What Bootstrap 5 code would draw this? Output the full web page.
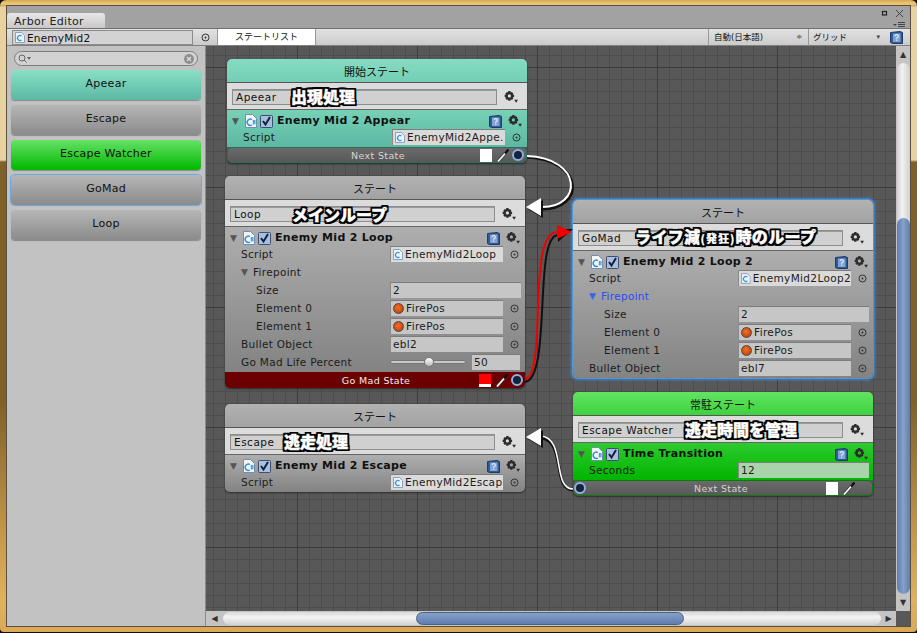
<!DOCTYPE html>
<html lang="ja"><head><meta charset="utf-8"><title>Arbor Editor</title>
<link href="https://cdn.jsdelivr.net/npm/bootstrap@5.3.0/dist/css/bootstrap.min.css" rel="stylesheet">
<style>
html,body{margin:0;height:633px;overflow:hidden;background:#111}
body{font-family:"DejaVu Sans","Noto Sans CJK JP",sans-serif;font-size:10.5px;line-height:14px;color:#111}
.frame{width:917px;height:632px;padding:6px 7px 6px 7px;border-radius:6px 6px 4px 4px;background:linear-gradient(180deg,#d8a850 0,#edcb7d 4px,#c9a668 6px,#e8d3a0 7px,#e8d3a0 160px,#7f6028 162px,#7f6028 400px,#c79a4c 540px,#e0b25e 600px,#d9a958 632px)}
.win{width:903px;height:620px;background:#a2a2a2;display:flex;flex-direction:column;position:relative;overflow:hidden;outline:1px solid #5a5040}
.tabstrip{height:22px;flex:none;display:flex;align-items:flex-end;justify-content:space-between}
.wintab{width:98px;height:15px;padding:2px 7px 0;background:linear-gradient(#e8e8e8,#c8c8c8);border-radius:3px 3px 0 0;font-size:11px;color:#222;letter-spacing:.3px;line-height:13px}
.winctl{display:flex;flex-direction:column;align-items:flex-end;height:22px;margin-top:-6px}
.tools{height:18px;flex:none;display:flex;background:linear-gradient(#e2e2e2,#cbcbcb);border-top:1px solid #707070;border-bottom:1px solid #808080}
.objfield{width:181px;margin:1px 0 0 5px;height:15px;background:#d3d3d3;border:1px solid #8c8c8c;padding-left:2px;display:flex;align-items:center;gap:2px;font-size:10.5px;letter-spacing:.2px}
.picker{width:24px;display:flex;align-items:center;justify-content:center}
.listtab{width:99px;background:#fff;border-left:1px solid #999;border-right:1px solid #999;text-align:center;font-size:9px;line-height:16px}
.toolspace{flex:1}
.pop{border-left:1px solid #999;font-size:8.5px;line-height:16px;padding-left:3px;position:relative}
.pop1{width:100px;padding-left:5px}.pop2{width:78px;padding-left:4px}
.popmark{position:absolute;right:6px;top:0;font-size:7px;color:#444}
.mainrow{flex:1;display:flex;min-height:0}
.side{width:199px;flex:none;background:#c2c2c2;padding:4px 4px 0;border-right:1px solid #8c8c8c}
.searchbox{height:15px;margin:1px 3px 4px 3px;background:#d2d2d2;border:1px solid #7d7d7d;border-radius:8px;display:flex;align-items:center;justify-content:space-between;padding:0 3px}
.statebtn{height:30px;border-radius:4px;margin-bottom:5px;text-align:center;line-height:27px;font-size:11px;letter-spacing:.25px;box-shadow:0 1px 1px #8a8a8a}
.b-teal{background:linear-gradient(#8adfc6,#5cb8a4)}
.b-gray{background:linear-gradient(#b6b6b6,#8b8b8b)}
.b-green{background:linear-gradient(#66e266,#00b800)}
.b-sel{box-shadow:0 0 0 1px #6fa8e0,0 0 2px #6fa8e0}
.viewcol{flex:1;display:flex;flex-direction:column;min-width:0}
.viewrow{flex:1;display:flex;min-height:0}
.canvasarea{flex:1;position:relative;overflow:hidden;background-color:#585858;background-image:linear-gradient(90deg,#3c3c3c 1px,transparent 1px),linear-gradient(#3c3c3c 1px,transparent 1px),linear-gradient(90deg,#4c4c4c 1px,transparent 1px),linear-gradient(#4c4c4c 1px,transparent 1px);background-size:120px 120px,120px 120px,12px 12px,12px 12px;background-position:91px 21px,91px 21px,7px 9px,7px 9px}
.vbar{width:14px;flex:none;background:#c4c4c4;display:flex;flex-direction:column;align-items:center}
.hbarrow{height:15px;flex:none;display:flex}
.hbar{flex:1;background:#c4c4c4;display:flex;align-items:center}
.corner{width:14px;background:#585858}
.arrowcell{flex:none;display:flex;align-items:center;justify-content:center;color:#333;font-size:8px;line-height:8px}
.vtrack{flex:1;width:13px;background:linear-gradient(90deg,#d0d0d0,#f2f2f2 40%,#d0d0d0);border-radius:7px;display:flex;flex-direction:column;justify-content:flex-end;min-height:0}
.vthumb{height:376px;border-radius:7px;background:linear-gradient(90deg,#5f7dae,#86a0c8 50%,#5f7dae)}
.htrack{flex:1;height:13px;background:linear-gradient(#d8d8d8,#f4f4f4 40%,#d2d2d2);border-radius:7px;padding-left:193px}
.hthumb{width:268px;height:13px;border-radius:7px;border:1px solid #48618c;background:linear-gradient(#86a0c8,#5f7dae)}
.nodebox{position:absolute;width:300px;border-radius:5px;overflow:hidden;display:flex;flex-direction:column;box-shadow:0 1px 2px #2a2a2a}
.nodesel{box-shadow:0 0 0 1px #4f95d8,0 0 3px 2px #4087cc}
.nhead{height:24px;text-align:center;line-height:28px;font-size:11px;color:#111;border-bottom:1px solid #555}
.nname{height:27px;flex:none;background:#dcdcdc;border-bottom:1px solid #666;display:flex;align-items:center;padding:1px 9px 0 5px;justify-content:space-between}
.nameinput{width:265px;height:16px;background:#d0d0d0;border:1px solid #8d8d8d;font-size:10.5px;line-height:14px;padding-left:3px;letter-spacing:.5px;box-shadow:inset 0 1px 0 #9a9a9a}
.nbody{padding:1px 0}
.h-teal{background:linear-gradient(#86dcc3,#74ceb5)}
.h-gray{background:linear-gradient(#b2b2b2,#a2a2a2)}
.h-green{background:linear-gradient(#62e462,#3ed23e)}
.c-teal{background:linear-gradient(#76d1b7,#5db8a2)}
.c-gray{background:linear-gradient(#aeaeae,#838383)}
.c-green{background:linear-gradient(#2dcb2d,#00b500)}
.ntitle{height:17px;display:flex;align-items:center;padding:3px 5px 0 5px;gap:2px;font-weight:700;font-size:11px;letter-spacing:.3px}
.chkbox{margin:0 1px}
.tri{color:#555;font-size:9px;width:11px;line-height:10px;flex:none}
.ttext{flex:1;padding-left:1px}
.nrow{height:18px;display:flex;align-items:center;padding-left:16px;position:relative;letter-spacing:.3px;font-size:10.5px;color:#1c1c1c}
.ind{padding-left:31px}
.fold{padding-left:16px;gap:2px}
.fold .tri{width:10px;font-size:9px}
.blue{color:#2a4cf0}
.blue .tri{color:#3d62f0}
.rlabel{width:149px;flex:none}
.ind .rlabel{width:134px}
.fld{height:16px;background:#c6c6c6;border:1px solid #8a8a8a;border-width:1px 0 0 1px;border-top-color:#7c7c7c;width:113px;flex:none;padding-left:2px;line-height:15px;overflow:hidden;white-space:nowrap;display:flex;align-items:center;gap:2px;letter-spacing:.35px}
.fldw{width:131px}
.fldlight{background:#dadada}
.fldgreen{background:#a9d4a9}
.dotpick{width:23px;flex:none;display:flex;justify-content:center}
.ball{width:11px;height:11px;border-radius:50%;background:radial-gradient(circle at 45% 40%,#ee7428,#b83000);border:1px solid #4a4a4a;flex:none}
.slide{width:76px;height:4px;flex:none;border-radius:2px;background:#c8c8c8;border:1px solid #777;position:relative;margin-right:5px}
.knob{position:absolute;left:33px;top:-4px;width:10px;height:10px;border-radius:50%;background:linear-gradient(#fff,#bbb);border:1px solid #777}
.fldnum{width:49px}
.nbar{height:16px;flex:none;display:flex;align-items:center;position:relative;border-radius:5px;font-size:9.5px;letter-spacing:.35px;text-align:center;color:#d4d4d4;line-height:15px}
.bar-gray{background:linear-gradient(#6a6a6a,#595959)}
.bar-t{border:1px solid #2a6e60}
.bar-g{border:1px solid #0a7a0a}
.bar-red{background:#6a0000;color:#eee;border-radius:0 0 5px 5px}
.barlabel{flex:1;padding-left:48px}
.barlabel-left{padding-left:30px}
.swatch{width:12px;height:13px;background:#fff;flex:none}
.swatch-red{background:linear-gradient(#ff0000 0,#ff0000 10px,#fff 10px)}
.dropper{width:12px;flex:none;margin:0 3px 0 5px;display:block}
.dropper-end{margin-right:17px}
.portdot{width:12px;height:12px;border-radius:50%;background:#16223a;border:2px solid #8db0e0;flex:none;margin-right:2px}
.portdot-left{margin:0}
.wires{position:absolute;left:0;top:0;width:690px;height:565px;pointer-events:none}
.cap{position:absolute;font-family:"Noto Sans CJK JP",sans-serif;font-weight:900;font-size:16px;line-height:18px;color:#fff;-webkit-text-stroke:.45px #fff;text-shadow:2px 0 0 #000,-2px 0 0 #000,0 2px 0 #000,0 -2px 0 #000,2px 2px 0 #000,-2px 2px 0 #000,2px -2px 0 #000,-2px -2px 0 #000,1px 2px 0 #000,-1px 2px 0 #000,1px -2px 0 #000,-1px -2px 0 #000;white-space:nowrap;letter-spacing:0}
.capwide{letter-spacing:.4px}
.capsm{font-size:11px;letter-spacing:1px;-webkit-text-stroke:.2px #fff}
</style></head><body>
<svg width="0" height="0" class="position-absolute">
<defs>
<symbol id="gear" viewBox="0 0 13 11"><path fill="#2c2c2c" fill-rule="evenodd" d="M4 0h2l.3 1.300 1-.5 1.400 1.400-.6 1 1.300.3v2l-1.300.3.6 1-1.400 1.400-1-.6L6 9H4l-.3-1.400-1 .6L1.300 6.800l.6-1L.6 5.500v-2l1.300-.3-.6-1L2.700.8l1 .5zM5 3a1.500 1.500 0 1 0 0 3 1.500 1.500 0 0 0 0-3z"/><path fill="#2c2c2c" d="M9.500 8h3.500l-1.750 2.800z"/></symbol>
<symbol id="script" viewBox="0 0 12 14"><path fill="#f4f4f4" stroke="#6f8fae" d="M.5.5h7l4 4v9H.5z"/><path fill="none" stroke="#2f8fd8" stroke-width="1.400" d="M7 5.500a3.200 3.200 0 1 0 0 5.500"/><path stroke="#2f8fd8" stroke-width=".8" d="M7.500 7h3M7.500 9h3M8.500 6v4.500M9.800 6v4.500"/></symbol>
<symbol id="scriptsm" viewBox="0 0 10 11"><path fill="#eef3f8" stroke="#8aa4bd" d="M.5.5h6l3 3v7h-9z"/><path fill="none" stroke="#3a94d8" stroke-width="1.300" d="M6.500 4a2.500 2.500 0 1 0 0 4"/></symbol>
<symbol id="check" viewBox="0 0 13 13"><rect x=".5" y=".5" width="12" height="12" rx="1" fill="#a9bfe0" stroke="#3c4f70"/><path fill="none" stroke="#12203a" stroke-width="2" d="M3 6l2.500 3.500L10 2"/></symbol>
<symbol id="book" viewBox="0 0 13 13"><path fill="#2f5a96" stroke="#1f3d68" d="M.5 1.500 10 .5l2.500 1v11H2.500l-2-1z"/><rect x="3" y="2.500" width="7.500" height="8.500" fill="#7fa4d4"/><path fill="none" stroke="#e8f0fa" stroke-width="1.100" d="M5.300 5a1.500 1.500 0 1 1 2.300 1.300c-.7.400-.9.700-.9 1.400M6.700 8.500v1.200"/></symbol>
<symbol id="drop" viewBox="0 0 12 13"><path stroke="#333" stroke-width="3" d="M1 12.500 8.500 4"/><path stroke="#f6f6f6" stroke-width="1.800" d="M1 12.500 8.500 4"/><path stroke="#111" stroke-width="2.400" d="M11.500.5 8 4.500"/></symbol>
<symbol id="pick" viewBox="0 0 9 9"><circle cx="4.500" cy="4.500" r="3.500" fill="none" stroke="#333"/><circle cx="4.500" cy="4.500" r="1" fill="#333"/></symbol>
</defs></svg>
<div class="frame"><div class="win">
 <div class="tabstrip">
  <div class="wintab">Arbor Editor</div>
  <div class="winctl"><svg width="40" height="22" viewBox="0 0 40 22"><rect x="12.500" y="5.500" width="4" height="3.500" fill="none" stroke="#222" stroke-width="1.200"/><path stroke="#444" d="M26 4l7 7M33 4l-7 7"/><path fill="#444" d="M23 18h4l-2 2z"/><path stroke="#444" d="M28 16.500h7M28 18.500h7M28 20.500h7"/></svg></div>
 </div>
 <div class="tools">
  <div class="objfield"><svg width="10" height="11"><use href="#scriptsm"/></svg>EnemyMid2</div>
  <div class="picker"><svg width="9" height="9"><use href="#pick"/></svg></div>
  <div class="listtab">ステートリスト</div>
  <div class="toolspace"></div>
  <div class="pop pop1">自動(日本語)<span class="popmark">≑</span></div>
  <div class="pop pop2">グリッド<span class="popmark">▾</span></div>
  <div class="picker pe-1"><svg width="13" height="13"><use href="#book"/></svg></div>
 </div>
 <div class="mainrow">
  <div class="side">
   <div class="searchbox"><svg width="14" height="10" viewBox="0 0 14 10"><circle cx="4" cy="4" r="3" fill="none" stroke="#666"/><path stroke="#666" d="M6 6l2.500 2.500"/><path fill="#666" d="M9 3h4l-2 3z"/></svg><svg width="10" height="10" viewBox="0 0 10 10"><circle cx="5" cy="5" r="5" fill="#8e8e8e"/><path stroke="#ddd" stroke-width="1.300" d="M3 3l4 4M7 3l-4 4"/></svg></div>
   <div class="statebtn b-teal">Apeear</div>
   <div class="statebtn b-gray">Escape</div>
   <div class="statebtn b-green">Escape Watcher</div>
   <div class="statebtn b-gray b-sel">GoMad</div>
   <div class="statebtn b-gray">Loop</div>
  </div>
  <div class="viewcol">
   <div class="viewrow">
    <div class="canvasarea">

     <div class="nodebox" style="left:21px;top:13px">
      <div class="nhead h-teal">開始ステート</div>
      <div class="nname"><div class="nameinput">Apeear</div><svg width="14" height="12"><use href="#gear"/></svg></div>
      <div class="nbody c-teal">
       <div class="ntitle"><span class="tri">▼</span><svg width="12" height="14"><use href="#script"/></svg><svg class="chkbox" width="13" height="13"><use href="#check"/></svg><span class="ttext">Enemy Mid 2 Appear</span><svg width="13" height="13"><use href="#book"/></svg><svg class="ms-1" width="14" height="12"><use href="#gear"/></svg></div>
       <div class="nrow"><span class="rlabel">Script</span><span class="fld fldlight"><svg width="10" height="11"><use href="#scriptsm"/></svg>EnemyMid2Appe.</span><span class="dotpick"><svg width="9" height="9"><use href="#pick"/></svg></span></div>
      </div>
      <div class="nbar bar-gray bar-t"><span class="barlabel">Next State</span><span class="swatch"></span><svg class="dropper" width="12" height="13"><use href="#drop"/></svg><span class="portdot"></span></div>
     </div>

     <div class="nodebox" style="left:19px;top:130px">
      <div class="nhead h-gray">ステート</div>
      <div class="nname"><div class="nameinput">Loop</div><svg width="14" height="12"><use href="#gear"/></svg></div>
      <div class="nbody c-gray">
       <div class="ntitle"><span class="tri">▼</span><svg width="12" height="14"><use href="#script"/></svg><svg class="chkbox" width="13" height="13"><use href="#check"/></svg><span class="ttext">Enemy Mid 2 Loop</span><svg width="13" height="13"><use href="#book"/></svg><svg class="ms-1" width="14" height="12"><use href="#gear"/></svg></div>
       <div class="nrow"><span class="rlabel">Script</span><span class="fld fldlight"><svg width="10" height="11"><use href="#scriptsm"/></svg>EnemyMid2Loop</span><span class="dotpick"><svg width="9" height="9"><use href="#pick"/></svg></span></div>
       <div class="nrow fold"><span class="tri">▼</span>Firepoint</div>
       <div class="nrow ind"><span class="rlabel">Size</span><span class="fld fldw">2</span></div>
       <div class="nrow ind"><span class="rlabel">Element 0</span><span class="fld"><span class="ball"></span>FirePos</span><span class="dotpick"><svg width="9" height="9"><use href="#pick"/></svg></span></div>
       <div class="nrow ind"><span class="rlabel">Element 1</span><span class="fld"><span class="ball"></span>FirePos</span><span class="dotpick"><svg width="9" height="9"><use href="#pick"/></svg></span></div>
       <div class="nrow"><span class="rlabel">Bullet Object</span><span class="fld">ebl2</span><span class="dotpick"><svg width="9" height="9"><use href="#pick"/></svg></span></div>
       <div class="nrow"><span class="rlabel">Go Mad Life Percent</span><span class="slide"><span class="knob"></span></span><span class="fld fldnum">50</span></div>
      </div>
      <div class="nbar bar-red"><span class="barlabel">Go Mad State</span><span class="swatch swatch-red"></span><svg class="dropper" width="12" height="13"><use href="#drop"/></svg><span class="portdot"></span></div>
     </div>

     <div class="nodebox" style="left:19px;top:358px">
      <div class="nhead h-gray">ステート</div>
      <div class="nname"><div class="nameinput">Escape</div><svg width="14" height="12"><use href="#gear"/></svg></div>
      <div class="nbody c-gray">
       <div class="ntitle"><span class="tri">▼</span><svg width="12" height="14"><use href="#script"/></svg><svg class="chkbox" width="13" height="13"><use href="#check"/></svg><span class="ttext">Enemy Mid 2 Escape</span><svg width="13" height="13"><use href="#book"/></svg><svg class="ms-1" width="14" height="12"><use href="#gear"/></svg></div>
       <div class="nrow"><span class="rlabel">Script</span><span class="fld fldlight"><svg width="10" height="11"><use href="#scriptsm"/></svg>EnemyMid2Escap</span><span class="dotpick"><svg width="9" height="9"><use href="#pick"/></svg></span></div>
      </div>
     </div>

     <div class="nodebox nodesel" style="left:367px;top:154px">
      <div class="nhead h-gray">ステート</div>
      <div class="nname"><div class="nameinput">GoMad</div><svg width="14" height="12"><use href="#gear"/></svg></div>
      <div class="nbody c-gray">
       <div class="ntitle"><span class="tri">▼</span><svg width="12" height="14"><use href="#script"/></svg><svg class="chkbox" width="13" height="13"><use href="#check"/></svg><span class="ttext">Enemy Mid 2 Loop 2</span><svg width="13" height="13"><use href="#book"/></svg><svg class="ms-1" width="14" height="12"><use href="#gear"/></svg></div>
       <div class="nrow"><span class="rlabel">Script</span><span class="fld fldlight"><svg width="10" height="11"><use href="#scriptsm"/></svg>EnemyMid2Loop2</span><span class="dotpick"><svg width="9" height="9"><use href="#pick"/></svg></span></div>
       <div class="nrow fold blue"><span class="tri">▼</span>Firepoint</div>
       <div class="nrow ind"><span class="rlabel">Size</span><span class="fld fldw">2</span></div>
       <div class="nrow ind"><span class="rlabel">Element 0</span><span class="fld"><span class="ball"></span>FirePos</span><span class="dotpick"><svg width="9" height="9"><use href="#pick"/></svg></span></div>
       <div class="nrow ind"><span class="rlabel">Element 1</span><span class="fld"><span class="ball"></span>FirePos</span><span class="dotpick"><svg width="9" height="9"><use href="#pick"/></svg></span></div>
       <div class="nrow"><span class="rlabel">Bullet Object</span><span class="fld">ebl7</span><span class="dotpick"><svg width="9" height="9"><use href="#pick"/></svg></span></div>
      </div>
     </div>

     <div class="nodebox" style="left:367px;top:346px">
      <div class="nhead h-green">常駐ステート</div>
      <div class="nname"><div class="nameinput">Escape Watcher</div><svg width="14" height="12"><use href="#gear"/></svg></div>
      <div class="nbody c-green">
       <div class="ntitle"><span class="tri">▼</span><svg width="12" height="14"><use href="#script"/></svg><svg class="chkbox" width="13" height="13"><use href="#check"/></svg><span class="ttext">Time Transition</span><svg width="13" height="13"><use href="#book"/></svg><svg class="ms-1" width="14" height="12"><use href="#gear"/></svg></div>
       <div class="nrow"><span class="rlabel">Seconds</span><span class="fld fldw fldgreen">12</span></div>
      </div>
      <div class="nbar bar-gray bar-g"><span class="portdot portdot-left"></span><span class="barlabel barlabel-left">Next State</span><span class="swatch"></span><svg class="dropper dropper-end" width="12" height="13"><use href="#drop"/></svg></div>
     </div>

     <svg class="wires" viewBox="206 46 690 565">
      <path fill="none" stroke="#111" stroke-width="3" d="M527 157C585 160 585 210 541 209"/>
      <path fill="none" stroke="#fff" stroke-width="2" d="M527 156C583 158 583 208 541 207"/>
      <path fill="#111" d="M528 209l15-9v18z"/><path fill="#fff" d="M526 207l15-9v18z"/>
      <path fill="none" stroke="#111" stroke-width="2" d="M525 382C552 378 533 236 558 235"/>
      <path fill="none" stroke="#f00000" stroke-width="2" d="M525 379C548 376 526 233 557 232"/>
      <path fill="#111" d="M558 229h15l-15 13z"/><path fill="#f00000" d="M557 225l15 7-15 7z"/>
      <path fill="none" stroke="#111" stroke-width="3" d="M573 490C552 490 566 440 541 438"/>
      <path fill="none" stroke="#fff" stroke-width="1.600" d="M573 489C552 489 566 438 541 436"/>
      <path fill="#111" d="M528 439l15-9v18z"/><path fill="#fff" d="M526 437l15-9v18z"/>
     </svg>

     <span class="cap" style="left:85px;top:41px">出現処理</span>
     <span class="cap" style="left:86px;top:159px">メインループ</span>
     <span class="cap" style="left:78px;top:386px">逃走処理</span>
     <span class="cap capwide" style="left:429px;top:181px">ライフ減<span class="capsm">(発狂)</span>時のループ</span>
     <span class="cap" style="left:479px;top:374px">逃走時間を管理</span>
    </div>
    <div class="vbar">
     <div class="arrowcell" style="height:17px">▲</div>
     <div class="vtrack"><div class="vthumb"></div></div>
     <div class="arrowcell" style="height:17px">▼</div>
    </div>
   </div>
   <div class="hbarrow">
    <div class="hbar">
     <div class="arrowcell" style="width:17px">◀</div>
     <div class="htrack"><div class="hthumb"></div></div>
     <div class="arrowcell" style="width:15px">▶</div>
    </div>
    <div class="corner"></div>
   </div>
  </div>
 </div>
</div></div>
</body></html>
